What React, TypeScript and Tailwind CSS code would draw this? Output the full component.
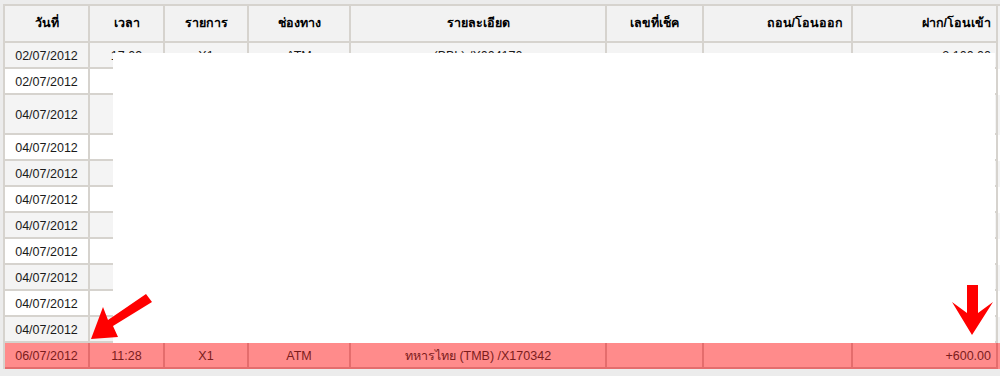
const cols = "grid grid-cols-[85px_75px_84px_102px_256px_97px_149px_145px]";
const font = { fontFamily: '"Liberation Sans", "Noto Sans", "DejaVu Sans", Tahoma, sans-serif' };

const headers = [
  { label: "วันที่", align: "justify-center" },
  { label: "เวลา", align: "justify-center" },
  { label: "รายการ", align: "justify-center" },
  { label: "ช่องทาง", align: "justify-center" },
  { label: "รายละเอียด", align: "justify-center" },
  { label: "เลขที่เช็ค", align: "justify-center" },
  { label: "ถอน/โอนออก", align: "justify-end pr-2" },
  { label: "ฝาก/โอนเข้า", align: "justify-end pr-[5px]" },
];

const rows = [
  { date: "02/07/2012", h: "h-[26px]", cells: ["17:09", "X1", "ATM", "(BBL) /X004170", "", "", "2,100.00"] },
  { date: "02/07/2012", h: "h-[26px]" },
  { date: "04/07/2012", h: "h-[40px]" },
  { date: "04/07/2012", h: "h-[26px]" },
  { date: "04/07/2012", h: "h-[26px]" },
  { date: "04/07/2012", h: "h-[26px]" },
  { date: "04/07/2012", h: "h-[26px]" },
  { date: "04/07/2012", h: "h-[26px]" },
  { date: "04/07/2012", h: "h-[26px]" },
  { date: "04/07/2012", h: "h-[26px]" },
  { date: "04/07/2012", h: "h-[26px]" },
];

function Row({ date, h, cells, odd }: { date: string; h: string; cells?: string[]; odd: boolean }) {
  const bg = odd ? "bg-[#f4f4f4]" : "bg-white";
  const c = cells ?? ["", "", "", "", "", "", ""];
  return (
    <div className={`${cols} ${h} ${bg} text-[12.5px] text-[#1a1a1a]`}>
      <div className="flex items-center justify-center pt-[2px] border-r-2 border-b-2 border-[#d6d3ce]">{date}</div>
      {c.map((t, i) => (
        <div
          key={i}
          className={`flex items-center pt-[2px] border-r-2 border-b-2 border-[#d6d3ce] ${i === 6 ? "justify-end pr-[5px]" : "justify-center"}`}
        >
          {t}
        </div>
      ))}
    </div>
  );
}

export default function App() {
  return (
    <div className="relative w-[1000px] h-[376px] overflow-hidden bg-[#ececec] pt-[4px] pl-[3px]" style={font}>
      <div className="w-[1100px] border-l-2 border-t-2 border-[#d6d3ce]">
        <div className={`${cols} h-[37px] bg-[#f2f2f2] text-[12.5px] font-bold text-black`}>
          {headers.map((hd, i) => (
            <div key={i} className={`flex items-center ${hd.align} border-r-2 border-b-2 border-[#d6d3ce]`}>
              {hd.label}
            </div>
          ))}
        </div>
        {rows.map((r, i) => (
          <Row key={i} date={r.date} h={r.h} cells={r.cells} odd={i % 2 === 0} />
        ))}
        <div className={`${cols} h-[26px] bg-[#ff8b8b] text-[12.5px] text-[#7c1c1c]`}>
          {["06/07/2012", "11:28", "X1", "ATM", "ทหารไทย (TMB) /X170342", "", "", "+600.00"].map((t, i) => (
            <div
              key={i}
              className={`flex items-center pt-[2px] border-r-2 border-b-2 border-[#e46d6d] ${i === 7 ? "justify-end pr-[5px]" : "justify-center"}`}
            >
              {t}
            </div>
          ))}
        </div>
      </div>

      {/* redaction block */}
      <div className="absolute left-[113px] top-[53px] w-[882px] h-[290px] bg-white" />

      {/* annotation arrows */}
      <svg className="absolute left-0 top-0" width="1000" height="376" viewBox="0 0 1000 376">
        <polygon points="152,302 146,294 108,320 103,307 91,339 118,337 113,326" fill="#ff0000" />
        <polygon points="967,285 978,285 978,313 993,302 972,335 952,302 967,313" fill="#ff0000" />
      </svg>
    </div>
  );
}
